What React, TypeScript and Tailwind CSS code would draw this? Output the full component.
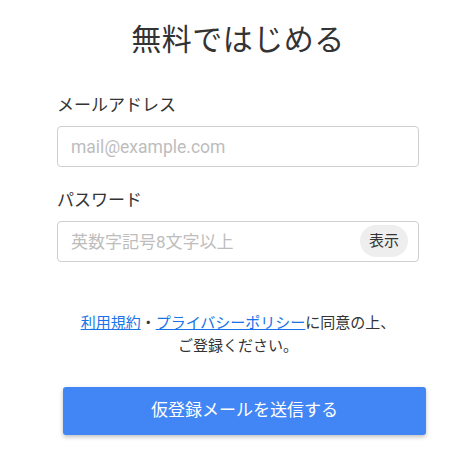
import React, { useState } from 'react'

function App() {
    const [show, setShow] = useState(false)

    return (
        <div className="min-h-[469px] w-[468px] bg-white font-['Roboto','Noto_Sans_CJK_JP',sans-serif] text-[#333]">
            <div className="flex flex-col pl-[57px] pr-[49px] pt-[18px]">
                {/* タイトル */}
                <h1 className="text-center text-[30px] leading-[44px] tracking-[0.5px] text-[#333]">
                    無料ではじめる
                </h1>

                {/* メール */}
                <label className="mt-[31px] text-[17px] leading-[24px] text-[#333]">メールアドレス</label>
                <input
                    type="email"
                    placeholder="mail@example.com"
                    className="mt-[9px] h-[41px] w-full rounded-[4px] border border-[#cfcfcf] px-[13px] text-[17.5px] outline-none placeholder:text-[#bdbdbd]"
                />

                {/* パスワード */}
                <label className="mt-[21px] text-[17px] leading-[24px] text-[#333]">パスワード</label>
                <div className="relative mt-[9px]">
                    <input
                        type={show ? 'text' : 'password'}
                        placeholder="英数字記号8文字以上"
                        className="h-[41px] w-full rounded-[4px] border border-[#cfcfcf] px-[13px] text-[17px] outline-none placeholder:text-[#bdbdbd]"
                    />
                    <button
                        onClick={() => setShow(!show)}
                        className="absolute right-[11px] top-[4px] h-[32px] w-[48px] rounded-full bg-[#eeeeee] text-[15px] text-[#333]"
                    >
                        表示
                    </button>
                </div>

                {/* 規約 */}
                <p className="mt-[50px] text-center text-[15px] leading-[23px] text-[#333]">
                    <a href="#" className="text-[#1a73e8] underline">利用規約</a>
                    ・
                    <a href="#" className="text-[#1a73e8] underline">プライバシーポリシー</a>
                    に同意の上、
                    <br />
                    ご登録ください。
                </p>

                <button className="ml-[6px] mr-[-7px] mt-[29px] h-[48px] rounded-[3px] bg-[#4286f5] text-[17px] text-white shadow-[0_2px_4px_rgba(0,0,0,0.25)]">
                    仮登録メールを送信する
                </button>
            </div>
        </div>
    )
}

export default App
